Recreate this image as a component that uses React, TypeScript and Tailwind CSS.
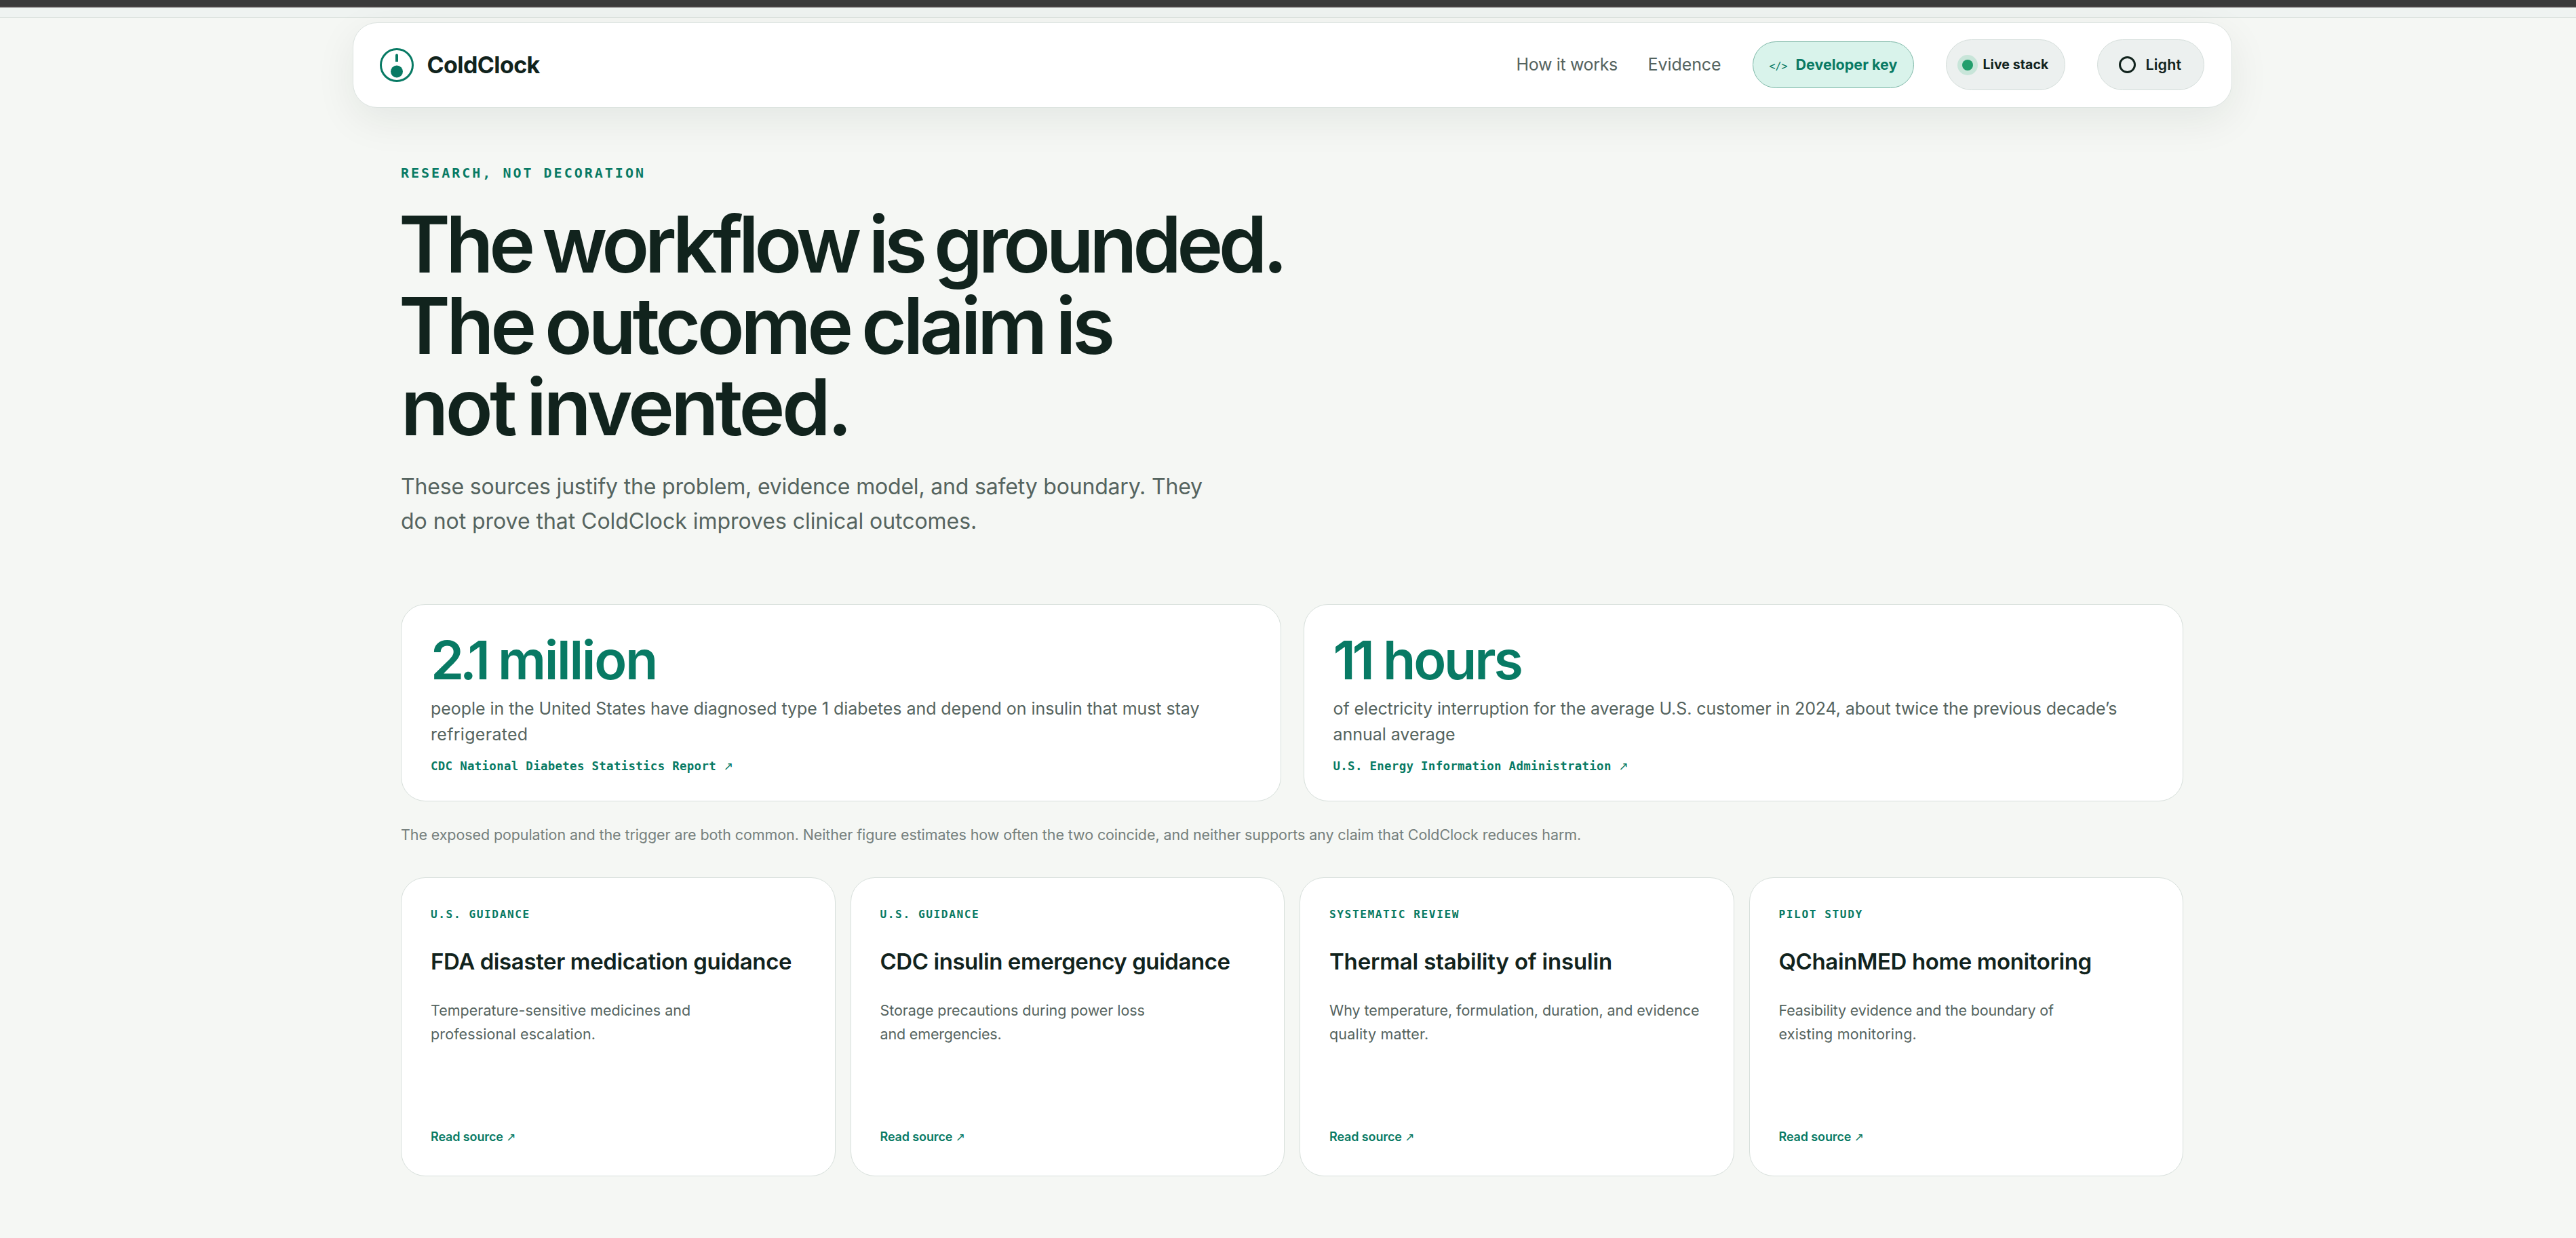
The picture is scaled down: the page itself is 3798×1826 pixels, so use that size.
// /pages/Evidence.tsx

import React from "react";

type Line = { text: string; track: string };

const navLinks = [
  { label: "How it works", className: "w-[147px] tracking-[-0.35px]" },
  { label: "Evidence", className: "w-[107px] tracking-[-0.07px]" },
];

const stats: { value: string; unit: string; space: string; track: string; lines: Line[]; source: string }[] = [
  {
    value: "2.1",
    unit: "million",
    space: "[word-spacing:0px] tracking-[-2.3px]",
    track: "tracking-[-6.5px]",
    lines: [
      { text: "people in the United States have diagnosed type 1 diabetes and depend on insulin that must stay", track: "tracking-[-0.056px]" },
      { text: "refrigerated", track: "tracking-[0.3px]" },
    ],
    source: "CDC National Diabetes Statistics Report",
  },
  {
    value: "11",
    unit: "hours",
    space: "[word-spacing:1px] tracking-[-3.2px]",
    track: "tracking-[-5.5px]",
    lines: [
      { text: "of electricity interruption for the average U.S. customer in 2024, about twice the previous decade’s", track: "tracking-[-0.098px]" },
      { text: "annual average", track: "tracking-[-0.037px]" },
    ],
    source: "U.S. Energy Information Administration",
  },
];

const sources: { kind: string; title: Line; lines: Line[] }[] = [
  {
    kind: "U.S. GUIDANCE",
    title: { text: "FDA disaster medication guidance", track: "tracking-[-0.394px]" },
    lines: [
      { text: "Temperature-sensitive medicines and", track: "tracking-[0.012px]" },
      { text: "professional escalation.", track: "tracking-[0.116px]" },
    ],
  },
  {
    kind: "U.S. GUIDANCE",
    title: { text: "CDC insulin emergency guidance", track: "tracking-[-0.447px]" },
    lines: [
      { text: "Storage precautions during power loss", track: "tracking-[-0.079px]" },
      { text: "and emergencies.", track: "tracking-[-0.161px]" },
    ],
  },
  {
    kind: "SYSTEMATIC REVIEW",
    title: { text: "Thermal stability of insulin", track: "tracking-[-0.174px]" },
    lines: [
      { text: "Why temperature, formulation, duration, and evidence", track: "tracking-[-0.054px]" },
      { text: "quality matter.", track: "tracking-[0.181px]" },
    ],
  },
  {
    kind: "PILOT STUDY",
    title: { text: "QChainMED home monitoring", track: "tracking-[-0.396px]" },
    lines: [
      { text: "Feasibility evidence and the boundary of", track: "tracking-[-0.185px]" },
      { text: "existing monitoring.", track: "tracking-[0.19px]" },
    ],
  },
];

function Logo() {
  return (
    <svg className="size-[50px] shrink-0" viewBox="0 0 50 50" fill="none">
      <circle cx="25" cy="25" r="23.5" stroke="#087a64" strokeWidth="3" />
      <path d="M25 10.5v9.5" stroke="#087a64" strokeWidth="4" />
      <circle cx="25" cy="10.5" r="2" fill="#087a64" />
      <circle cx="25" cy="34.5" r="9" fill="#087a64" />
    </svg>
  );
}

function Arrow() {
  return <span className="font-['DejaVu_Sans',sans-serif] text-[17px] font-normal">↗</span>;
}

function Nav() {
  return (
    <nav className="mx-auto mt-[7px] flex h-[126px] w-[2771px] items-center justify-between rounded-[36px] border border-[#dce3e0] bg-white pb-px pl-[39px] pr-[40px] shadow-[0_18px_60px_rgba(17,35,29,0.075)]">
      <div className="flex items-center gap-5">
        <Logo />
        <span className="text-[34px] font-bold tracking-[-0.6px]">ColdClock</span>
      </div>

      <div className="flex items-center gap-[47px] whitespace-nowrap">
        {navLinks.map((link) => (
          <a key={link.label} className={`text-[25px] text-[#55645f] ${link.className}`}>{link.label}</a>
        ))}

        <div className="flex h-[69px] w-[238px] items-center rounded-full border border-[#7fb8a8] bg-[#d9f3eb] pl-[24px] text-[#087a64]">
          <div className="flex items-baseline">
            <span className="w-[39px] font-['DejaVu_Sans_Mono',monospace] text-[15px]">&lt;/&gt;</span>
            <span className="text-[21.5px] font-bold">Developer key</span>
          </div>
        </div>

        <div className="flex h-[75px] w-[176px] items-center gap-[8px] rounded-full border border-[#d5dedb] bg-[#ecf0ef] pl-[16px]">
          <span className="flex size-[30px] items-center justify-center rounded-full bg-[#c8e5d9]">
            <span className="size-[16px] rounded-full bg-[#229e6c]" />
          </span>
          <span className="text-[19.5px] font-bold tracking-[0.07px]">Live stack</span>
        </div>

        <div className="flex h-[75px] w-[158px] items-center gap-[15px] rounded-full border border-[#d5dedb] bg-[#ecf0ef] pl-[31px]">
          <span className="size-[25px] rounded-full border-[3px] border-[#11231d]" />
          <span className="text-[21.5px] font-semibold tracking-[0.15px]">Light</span>
        </div>
      </div>
    </nav>
  );
}

export default function App() {
  return (
    <div className="min-h-screen bg-[#f5f7f4] font-['Inter',sans-serif] text-[#11231d]">
      {/* browser edge */}
      <div className="h-[11px] border-b-2 border-[#474243] bg-[#3b3b3b]" />
      <div className="h-[15px] border-b border-[#d3dcd7] bg-[#eff3f1]" />

      <div className="pl-3">
        <Nav />

        <main className="mx-auto w-[2628px] whitespace-nowrap pt-[81px]">
          <p className="font-['DejaVu_Sans_Mono',monospace] text-[20px] font-bold leading-[30px] tracking-[3px] text-[#087a64]">RESEARCH, NOT DECORATION</p>

          <h1 className="mt-[31px] text-[115px] font-semibold leading-[120px] [word-spacing:-6px]">
            <span className="-ml-[3px] block tracking-[-6.55px]">The workflow is grounded.</span>
            <span className="-ml-[3px] block tracking-[-5.56px]">The outcome claim is</span>
            <span className="block tracking-[-4.71px]">not invented.</span>
          </h1>

          <p className="mt-8 text-[32px] leading-[50.5px] text-[#55645f]">
            <span className="block tracking-[-0.183px]">These sources justify the problem, evidence model, and safety boundary. They</span>
            <span className="block tracking-[-0.043px]">do not prove that ColdClock improves clinical outcomes.</span>
          </p>

          <section className="mt-[97px] grid grid-cols-2 gap-[33px]">
            {stats.map((stat) => (
              <div key={stat.value} className="h-[291px] rounded-[36px] border border-[#d7dfdb] bg-white px-[43px] pt-[42px]">
                <div className={`text-[79px] font-semibold leading-[79px] text-[#087a64] ${stat.space}`}>
                  <span className={stat.track}>{stat.value}</span> {stat.unit}
                </div>
                <p className="mt-[14px] text-[25px] leading-[37.5px] text-[#55645f]">
                  {stat.lines.map((line) => (
                    <span key={line.text} className={`block ${line.track}`}>{line.text}</span>
                  ))}
                </p>
                <a className="mt-4 block font-['DejaVu_Sans_Mono',monospace] text-[17.4px] font-bold leading-6 tracking-[0.325px] text-[#087a64]">
                  {stat.source} <Arrow />
                </a>
              </div>
            ))}
          </section>

          <p className="mt-8 text-[21.5px] leading-[34px] tracking-[-0.098px] text-[#75807d]">
            The exposed population and the trigger are both common. Neither figure estimates how often the two coincide, and neither supports any claim that ColdClock reduces harm.
          </p>

          <section className="mt-[46px] grid grid-cols-4 gap-[22px]">
            {sources.map((source) => (
              <article key={source.title.text} className="flex h-[441px] flex-col rounded-[36px] border border-[#d7dfdb] bg-white px-[43px] pb-[44px] pt-[42px]">
                <span className="font-['DejaVu_Sans_Mono',monospace] text-[16.2px] font-bold leading-6 tracking-[1.55px] text-[#087a64]">{source.kind}</span>
                <h2 className={`mt-9 text-[33px] font-semibold leading-[42px] ${source.title.track}`}>{source.title.text}</h2>
                <p className="mt-[34px] text-[21.5px] leading-[35px] text-[#55645f]">
                  {source.lines.map((line) => (
                    <span key={line.text} className={`block ${line.track}`}>{line.text}</span>
                  ))}
                </p>
                <a className="mt-auto text-[18px] font-semibold leading-[26px] tracking-[-0.12px] text-[#087a64]">
                  Read source <Arrow />
                </a>
              </article>
            ))}
          </section>
        </main>
      </div>
    </div>
  );
}
